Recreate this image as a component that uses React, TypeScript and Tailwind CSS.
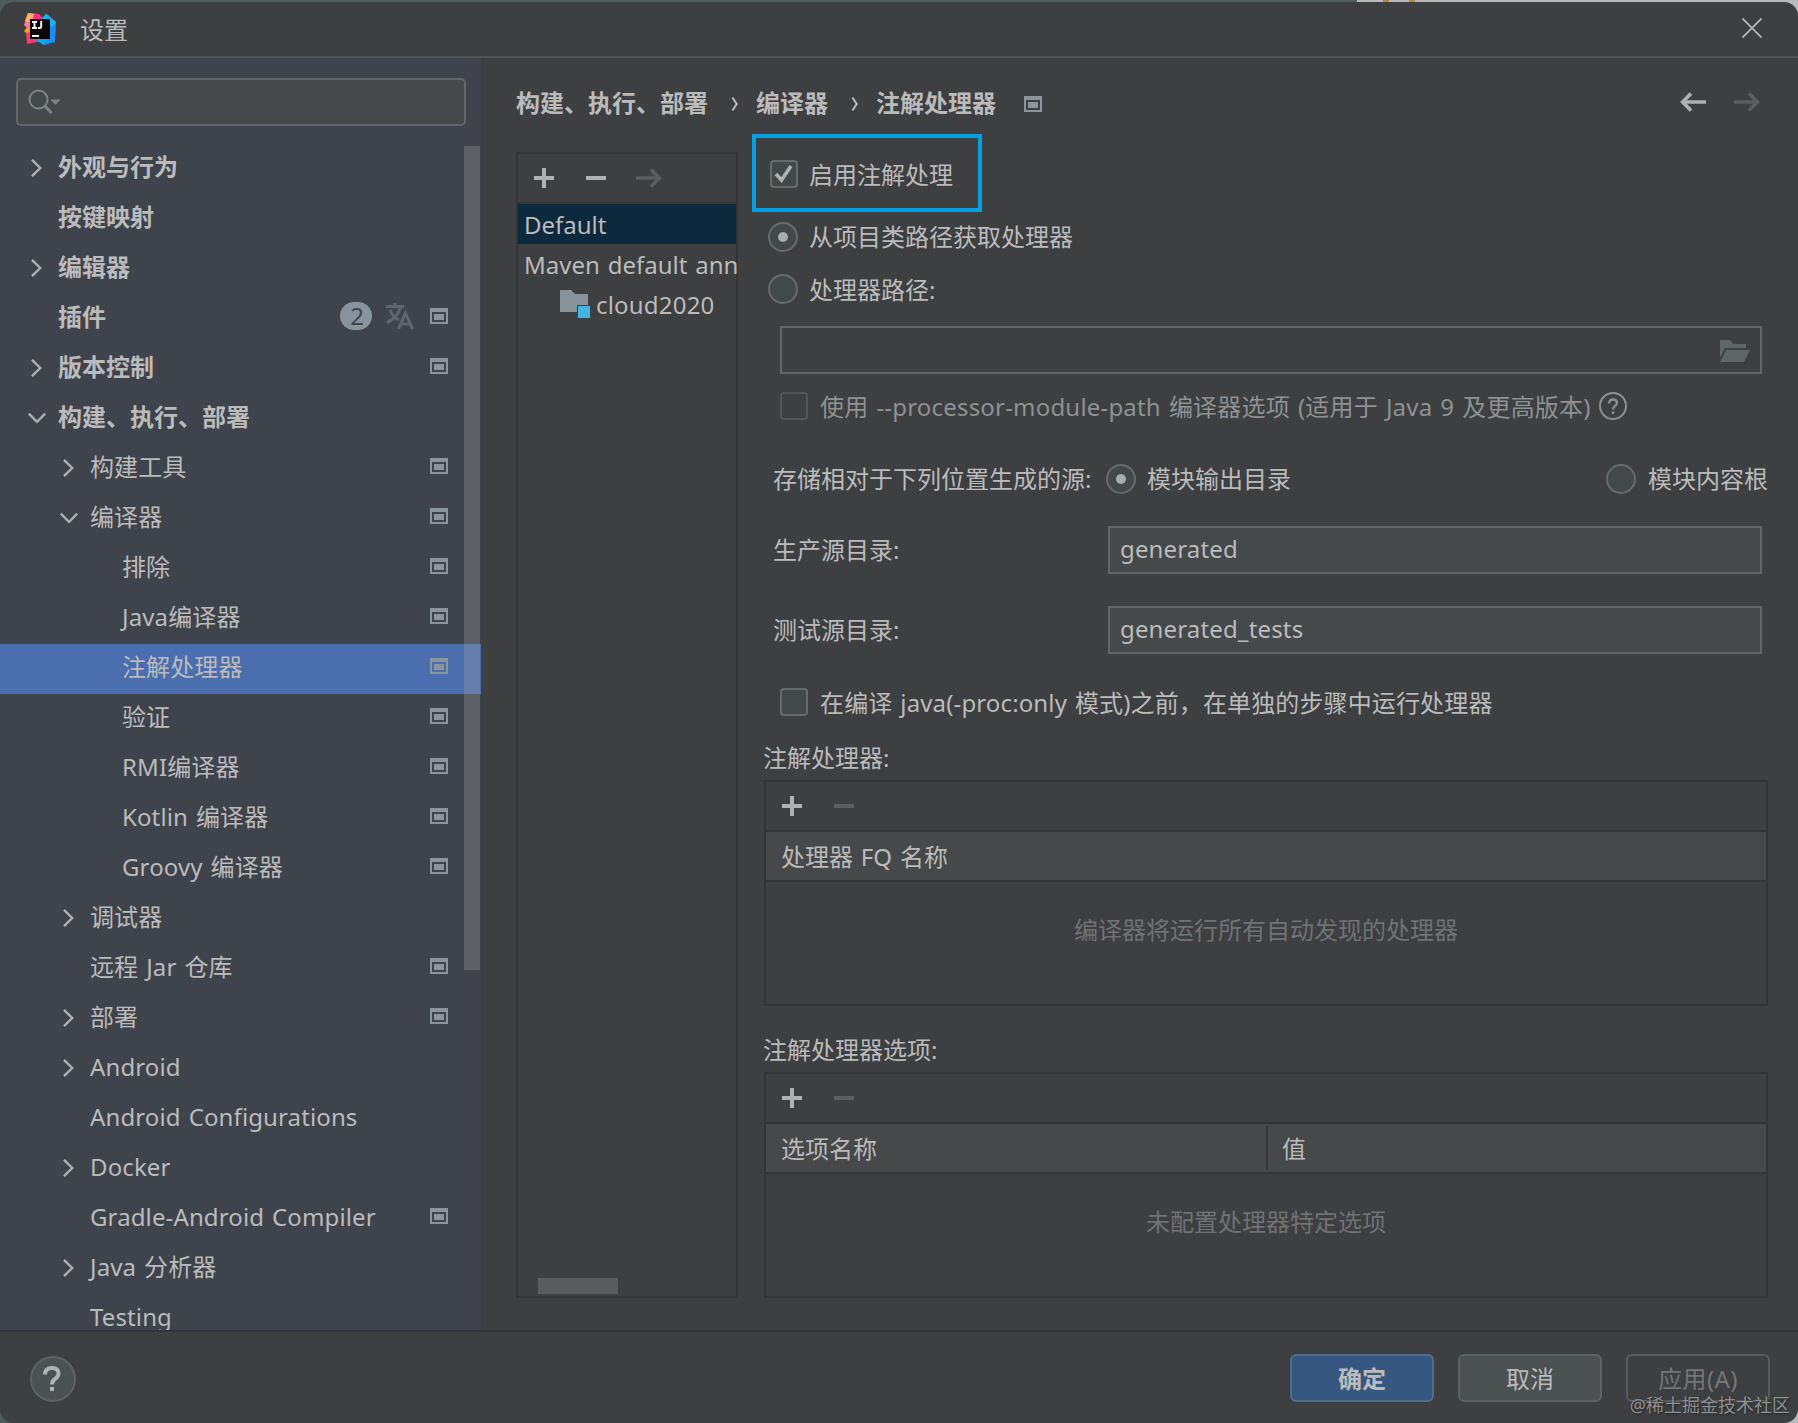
import React from 'react';
import clsx from 'clsx';

type TreeItem = {
  label: string;
  level: 0 | 1 | 2;
  state?: 'open' | 'closed';
  project?: boolean;
  badge?: string;
  selected?: boolean;
};

const treeItems: TreeItem[] = [
  { label: '外观与行为', level: 0, state: 'closed' },
  { label: '按键映射', level: 0 },
  { label: '编辑器', level: 0, state: 'closed' },
  { label: '插件', level: 0, project: true, badge: '2' },
  { label: '版本控制', level: 0, state: 'closed', project: true },
  { label: '构建、执行、部署', level: 0, state: 'open' },
  { label: '构建工具', level: 1, state: 'closed', project: true },
  { label: '编译器', level: 1, state: 'open', project: true },
  { label: '排除', level: 2, project: true },
  { label: 'Java编译器', level: 2, project: true },
  { label: '注解处理器', level: 2, project: true, selected: true },
  { label: '验证', level: 2, project: true },
  { label: 'RMI编译器', level: 2, project: true },
  { label: 'Kotlin 编译器', level: 2, project: true },
  { label: 'Groovy 编译器', level: 2, project: true },
  { label: '调试器', level: 1, state: 'closed' },
  { label: '远程 Jar 仓库', level: 1, project: true },
  { label: '部署', level: 1, state: 'closed', project: true },
  { label: 'Android', level: 1, state: 'closed' },
  { label: 'Android Configurations', level: 1 },
  { label: 'Docker', level: 1, state: 'closed' },
  { label: 'Gradle-Android Compiler', level: 1, project: true },
  { label: 'Java 分析器', level: 1, state: 'closed' },
  { label: 'Testing', level: 1 },
];

const indent = ['pl-[26px]', 'pl-[58px]', 'pl-[90px]'];

const ProjectIcon = () => (
  <svg width="18" height="16" viewBox="0 0 18 16" className="shrink-0">
    <path fillRule="evenodd" d="M0 0H18V16H0ZM2 4V14H16V4Z" fill="#8b959d" />
    <rect x="4" y="6" width="10" height="6" fill="#8b959d" />
  </svg>
);

const Chevron: React.FC<{ state?: 'open' | 'closed' }> = ({ state }) => (
  <svg width="22" height="22" viewBox="0 0 22 22" className="shrink-0" fill="none" stroke="#adb0b3" strokeWidth="2.4">
    {state === 'closed' && <path d="M6 2.8L14.2 11L6 19.2" />}
    {state === 'open' && <path d="M2.8 6.6L11 14.8L19.2 6.6" />}
  </svg>
);

const PlusIcon = () => (
  <svg width="20" height="20" viewBox="0 0 20 20" fill="#afb1b3">
    <path d="M8 0H12V8H20V12H12V20H8V12H0V8H8Z" />
  </svg>
);

const MinusIcon: React.FC<{ disabled?: boolean }> = ({ disabled }) => (
  <svg width="20" height="20" viewBox="0 0 20 20" fill={disabled ? '#5b5d5f' : '#afb1b3'}>
    <rect y="8" width="20" height="4" />
  </svg>
);

const ArrowIcon: React.FC<{ left?: boolean }> = ({ left }) => (
  <svg
    width="26"
    height="20"
    viewBox="0 0 26 20"
    fill="none"
    stroke={left ? '#afb1b3' : '#5b5d5f'}
    strokeWidth="3.6"
    className={left ? 'rotate-180' : ''}
  >
    <path d="M0 10H23" />
    <path d="M15 1.6L23.4 10L15 18.4" />
  </svg>
);

const Separator = () => (
  <svg width="48" height="16" viewBox="0 0 48 16" className="shrink-0" fill="none" stroke="#bbbbbb" strokeWidth="2">
    <path d="M24.500 1.500L28.700 8L24.500 14.500" />
  </svg>
);

const Radio: React.FC<{ checked?: boolean }> = ({ checked }) => (
  <span className="flex size-[30px] shrink-0 items-center justify-center rounded-full border-2 border-[#686b6c] bg-[#43494a]">
    {checked && <span className="size-[10px] rounded-full bg-[#a9acad]" />}
  </span>
);

const Checkbox: React.FC<{ checked?: boolean; disabled?: boolean }> = ({ checked, disabled }) => (
  <span
    className={clsx(
      'flex size-7 shrink-0 items-center justify-center rounded-[4px] border-2',
      disabled ? 'border-[#535556] bg-[#3d3f41]' : 'border-[#686b6c] bg-[#43494a]'
    )}
  >
    {checked && (
      <svg width="20" height="22" viewBox="0 0 20 22" fill="none" stroke="#afb1b3" strokeWidth="3.6">
        <path d="M2 11L7.5 17L17 3" />
      </svg>
    )}
  </span>
);

const Logo = () => (
  <svg width="32" height="32" viewBox="0 0 32 32">
    <path d="M4 0L14 1L18 5L10 22L0 12Z" fill="#fc7aa0" />
    <path d="M4 0L10 1L7 9L1 8Z" fill="#fdb060" />
    <path d="M10 1L15 1L19 6L8 10Z" fill="#fe2d8b" />
    <path d="M0 18L4 13L8 20L4 22Z" fill="#fc9a1e" />
    <path d="M2 20L10 18L18 28L3 31Z" fill="#fe3a78" />
    <path d="M18 5L23 1L32 9L31 29L20 32L12 27L24 20Z" fill="#1c8df5" />
    <path d="M18 5L22 1L32 9L28 14Z" fill="#12b5f2" />
    <path d="M12 27L26 22L20 32Z" fill="#12a9f5" />
    <rect x="6" y="6" width="20" height="20" fill="#0b0508" />
    <path d="M8 9H13M10.5 9V15M8 15H13M17.2 8V13.5Q17.2 15 15.6 15H14" fill="none" stroke="#fff" strokeWidth="1.9" />
    <rect x="8" y="22" width="7" height="1.9" fill="#fff" />
  </svg>
);

const TreeRow: React.FC<{ item: TreeItem }> = ({ item }) => (
  <div
    className={clsx(
      'flex h-[50px] shrink-0 items-center pr-[33px] pb-[3px]',
      indent[item.level],
      item.selected && 'bg-[#4b6eaf]'
    )}
  >
    <Chevron state={item.state} />
    <span
      className={clsx(
        'ml-[10px] flex-1 whitespace-nowrap',
        item.level === 0 ? 'mb-[1px] font-bold' : 'mb-[1px] tracking-[0.12px]'
      )}
    >
      {item.label}
    </span>
    <div className="mb-[3px] flex items-center">
      {item.badge && (
        <>
          <span className="mr-[14px] flex h-7 w-8 items-center justify-center rounded-full bg-[#87939d] pl-[2px] text-[#3e434c]">
            {item.badge}
          </span>
          <svg width="28" height="28" viewBox="0 0 28 28" className="mr-4" fill="none" stroke="#5f656e" strokeWidth="3.1">
            <path d="M0 4.500H18M9 1V5M14.500 5Q12 15 1 20.500M4 8Q7 15 13 18" />
            <path d="M12.500 27L19.500 11L26.500 27M15 22H24" />
          </svg>
        </>
      )}
      {item.project && <ProjectIcon />}
    </div>
  </div>
);

const TableToolbar = () => (
  <div className="flex h-[50px] items-center gap-8 border-b-2 border-[#323436] pl-4">
    <PlusIcon />
    <MinusIcon disabled />
  </div>
);

const App: React.FC = () => {
  return (
    <div className="h-[1423px] w-[1798px] overflow-hidden bg-[linear-gradient(90deg,#4c5d5c_0,#4c5d5c_1357px,#b9babb_1357px,#b9babb_1383px,#b08f3c_1383px,#b08f3c_1389px,#b9babb_1389px,#b9babb_1409px,#b08f3c_1409px,#b08f3c_1415px,#b9babb_1415px)] pt-[2px] font-['Noto_Sans','Noto_Sans_CJK_SC',sans-serif] text-[24px] leading-9 [word-spacing:1.6px] text-[#bbbbbb]">
      <div className="flex h-[1421px] flex-col overflow-hidden rounded-[14px] bg-[#3d3f41]">
        <header className="flex h-14 shrink-0 items-center border-b-2 border-[#515355] pr-9 pl-6">
          <Logo />
          <h1 className="mt-[1px] ml-6 flex-1">设置</h1>
          <svg width="20" height="20" viewBox="0 0 20 20" className="mb-[2px]" stroke="#b4b6b7" strokeWidth="1.8">
            <path d="M0.500 0.500L19.500 19.500M19.500 0.500L0.500 19.500" />
          </svg>
        </header>

        <div className="flex h-[1272px] shrink-0">
          <aside className="relative flex w-[481px] shrink-0 flex-col overflow-hidden bg-[#3e434c]">
            <div className="mx-4 mt-5 mb-[18px] flex h-12 w-[450px] shrink-0 items-center rounded-[5px] border-2 border-[#63676a] bg-[#45494a] pl-[10px]">
              <svg width="34" height="26" viewBox="0 0 34 26">
                <circle cx="10.500" cy="10.500" r="9" fill="none" stroke="#7e8386" strokeWidth="2" />
                <path d="M16.500 16.500L23.500 24" stroke="#7e8386" strokeWidth="3" />
                <path d="M22.500 10.500H32.500L27.500 16Z" fill="#7e8386" />
              </svg>
            </div>
            {treeItems.map(item => (
              <TreeRow key={item.label} item={item} />
            ))}
            <div className="absolute top-[88px] left-[464px] h-[824px] w-4 bg-[#a6a6a6]/30" />
          </aside>

          <main className="flex min-w-0 flex-1 flex-col">
            <div className="flex h-[76px] shrink-0 items-center pt-4 pr-[38px] pl-[35px] font-bold">
              <span className="mb-[2px]">构建、执行、部署</span>
              <Separator />
              <span className="mb-[2px]">编译器</span>
              <Separator />
              <span className="mr-7 mb-[2px]">注解处理器</span>
              <ProjectIcon />
              <div className="mb-1 ml-auto flex gap-7">
                <ArrowIcon left />
                <ArrowIcon />
              </div>
            </div>

            <div className="flex flex-1">
              <div className="mt-[18px] ml-[35px] flex h-[1146px] w-[222px] shrink-0 flex-col border-2 border-[#323436]">
                <div className="flex h-[50px] shrink-0 items-center gap-8 border-b-2 border-[#323436] pl-4">
                  <PlusIcon />
                  <MinusIcon />
                  <span className="-ml-[2px]">
                    <ArrowIcon />
                  </span>
                </div>
                <div className="h-10 bg-[#0d293e] pl-[6px] leading-[42px]">Default</div>
                <div className="h-10 pl-[6px] leading-[42px] whitespace-nowrap">Maven default ann</div>
                <div className="flex h-10 items-center gap-[6px] pl-[42px]">
                  <svg width="30" height="28" viewBox="0 0 30 28">
                    <path d="M0 0H11L15 4H28V15H17V22H0Z" fill="#87939a" />
                    <rect x="18" y="16" width="12" height="12" fill="#40b6e0" />
                  </svg>
                  <span className="mt-[2px] tracking-[0.2px]">cloud2020</span>
                </div>
                <div className="mt-auto mb-[2px] ml-5 h-4 w-20 bg-[#5a5b5d]" />
              </div>

              <div className="ml-[14px] flex w-[1016px] shrink-0 flex-col">
                <div className="flex h-[78px] w-[230px] shrink-0 items-center gap-[11px] border-4 border-[#059fe4] pt-[2px] pl-[14px]">
                  <Checkbox checked />
                  <span className="mt-[2px]">启用注解处理</span>
                </div>
                <div className="flex h-[50px] items-center gap-[11px] pl-4">
                  <Radio checked />
                  <span>从项目类路径获取处理器</span>
                </div>
                <div className="flex h-[54px] items-center gap-[11px] pl-4">
                  <Radio />
                  <span className="mt-[1px]">处理器路径:</span>
                </div>
                <div className="mt-[10px] ml-7 flex h-12 w-[982px] shrink-0 items-center justify-end border-2 border-[#636567] pt-[2px] pr-[10px]">
                  <svg width="30" height="22" viewBox="0 0 30 22" fill="#5f6668">
                    <path d="M0 0H10L13 4H26V8H5L0 18Z" />
                    <path d="M6 10H30L24 22H0Z" />
                  </svg>
                </div>
                <div className="flex h-16 items-center pl-7 text-[#8f9192]">
                  <Checkbox disabled />
                  <span className="mt-[2px] ml-3 tracking-[0.19px] whitespace-nowrap">
                    使用 --processor-module-path 编译器选项 (适用于 Java 9 及更高版本)
                  </span>
                  <svg width="28" height="28" viewBox="0 0 28 28" className="ml-2" fill="none" stroke="#8a9194">
                    <circle cx="14" cy="14" r="13" strokeWidth="2" />
                    <path d="M10 11.500Q10 7.500 14 7.500Q18 7.500 18 11Q18 13 15.500 14.500Q14 15.500 14 17.500" strokeWidth="2.400" />
                    <path d="M14 19.500V22" strokeWidth="2.600" />
                  </svg>
                </div>
                <div className="flex h-[82px] items-center pl-[21px]">
                  <span className="w-[333px]">存储相对于下列位置生成的源:</span>
                  <Radio checked />
                  <span className="ml-[11px]">模块输出目录</span>
                  <span className="ml-auto flex items-center gap-3">
                    <Radio />
                    <span>模块内容根</span>
                  </span>
                </div>
                <div className="mt-[6px] flex h-12 shrink-0 items-center pl-[21px]">
                  <span className="w-[335px]">生产源目录:</span>
                  <div className="h-12 w-[654px] border-2 border-[#636567] bg-[#45494a] pl-[10px] leading-[42px] tracking-[0.15px]">generated</div>
                </div>
                <div className="mt-8 flex h-12 shrink-0 items-center pl-[21px]">
                  <span className="w-[335px]">测试源目录:</span>
                  <div className="h-12 w-[654px] border-2 border-[#636567] bg-[#45494a] pl-[10px] leading-[42px] tracking-[0.15px]">generated_tests</div>
                </div>
                <div className="mt-5 flex h-14 items-center gap-3 pl-7">
                  <Checkbox />
                  <span className="mt-[2px] tracking-[0.13px]">在编译 java(-proc:only 模式)之前，在单独的步骤中运行处理器</span>
                </div>

                <div className="flex h-[50px] items-end pb-1 pl-[11px]">注解处理器:</div>
                <div className="ml-3 h-[226px] shrink-0 border-2 border-[#323436]">
                  <TableToolbar />
                  <div className="h-[50px] border-b-2 border-[#343638] bg-[#464849] pl-[15px] leading-[50px]">处理器 FQ 名称</div>
                  <div className="pt-[30px] text-center text-[#707274]">编译器将运行所有自动发现的处理器</div>
                </div>

                <div className="flex h-[66px] items-end pb-1 pl-[11px]">注解处理器选项:</div>
                <div className="ml-3 h-[226px] shrink-0 border-2 border-[#323436]">
                  <TableToolbar />
                  <div className="flex h-[50px] items-center border-b-2 border-[#343638] bg-[#464849] leading-[44px]">
                    <span className="w-[502px] border-r-2 border-[#343638] pt-[2px] pl-[15px] leading-[42px]">选项名称</span>
                    <span className="pt-[2px] pl-[14px]">值</span>
                  </div>
                  <div className="pt-[30px] text-center text-[#707274]">未配置处理器特定选项</div>
                </div>
              </div>
            </div>
          </main>
        </div>

        <footer className="relative flex flex-1 items-start gap-6 border-t-2 border-[#323436] pt-[22px] pr-7 pl-[30px]">
          <button className="mt-[2px] mr-auto flex size-[46px] items-center justify-center rounded-full border-2 border-[#5e6263] bg-[#4c5152]">
            <svg width="18" height="26" viewBox="0 0 18 26" fill="none" stroke="#afb3b5" strokeWidth="4" className="mr-[2px] mb-[1px]">
              <path d="M2 8.500Q2 2 9 2Q15.500 2 15.500 7.500Q15.500 10.500 12 13Q9 15 9 18.500" />
              <path d="M9 21V25" />
            </svg>
          </button>
          <button className="h-12 w-36 rounded-[6px] border-2 border-[#4c708c] bg-[#365880] pt-[2px] font-bold">确定</button>
          <button className="h-12 w-36 rounded-[6px] border-2 border-[#5e6263] bg-[#4c5152] pt-[2px]">取消</button>
          <button className="h-12 w-36 rounded-[6px] border-2 border-[#595c5d] pt-[2px] tracking-[0.4px] text-[#747677]">应用(A)</button>
          <span className="absolute top-[61px] right-2 text-[18px] leading-6 whitespace-nowrap text-[#8d8f90] [text-shadow:1px_1px_2px_#222]">
            @稀土掘金技术社区
          </span>
        </footer>
      </div>
    </div>
  );
};

export default App;
